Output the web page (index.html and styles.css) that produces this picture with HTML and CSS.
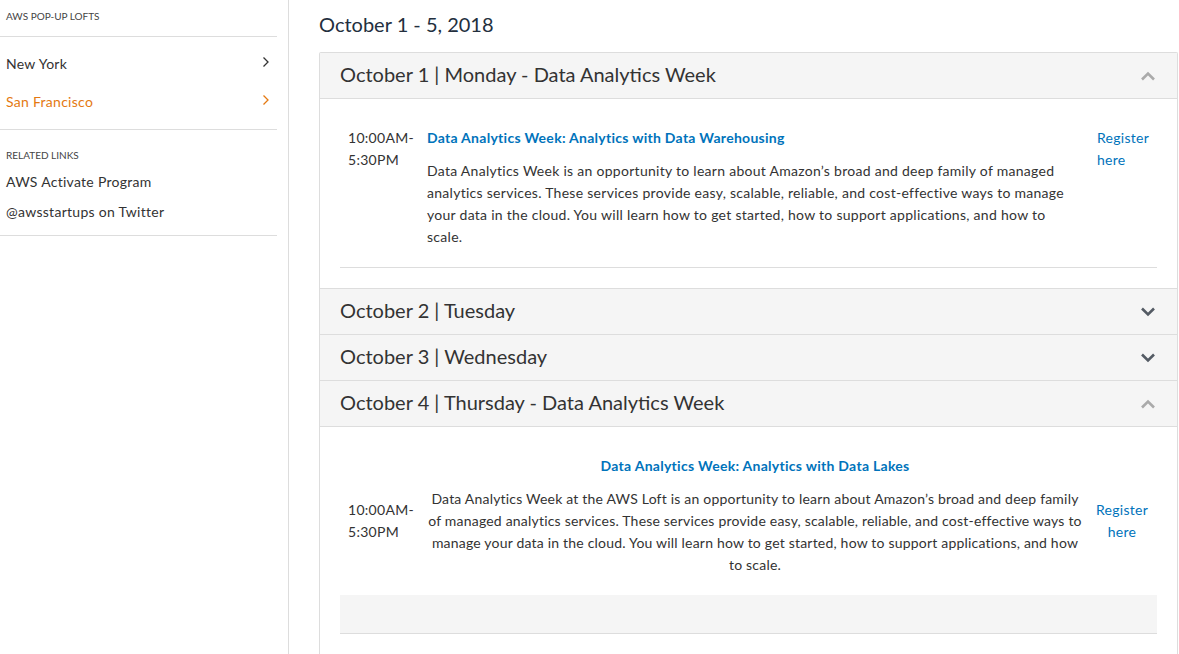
FILE: index.html
```html
<!DOCTYPE html>
<html lang="en">
<head>
    <meta charset="UTF-8">
    <meta name="viewport" content="width=device-width, initial-scale=1.0">
    <title>AWS Pop-up Lofts - San Francisco</title>
    <link rel="stylesheet" href="styles.css">
</head>
<body>
    <div class="page">
        <!-- Sidebar -->
        <aside class="sidebar">
            <div class="side-section">
                <div class="side-label">AWS Pop-up Lofts</div>
            </div>
            <div class="side-section lofts">
                <a class="loft" href="#">New York
                    <svg class="loft-arrow" width="8" height="12" viewBox="0 0 8 12"><path d="M1.5 1.5L6 6l-4.5 4.5" fill="none" stroke="currentColor" stroke-width="1.3"/></svg>
                </a>
                <a class="loft active" href="#">San Francisco
                    <svg class="loft-arrow" width="8" height="12" viewBox="0 0 8 12"><path d="M1.5 1.5L6 6l-4.5 4.5" fill="none" stroke="currentColor" stroke-width="1.3"/></svg>
                </a>
            </div>
            <div class="side-section related">
                <div class="side-label">Related Links</div>
                <a class="side-link" href="#">AWS Activate Program</a>
                <a class="side-link" href="#">@awsstartups on Twitter</a>
            </div>
        </aside>

        <!-- Schedule -->
        <main class="main">
            <h2 class="week-title">October 1 - 5, 2018</h2>

            <div class="accordion">
                <div class="day open">
                    <div class="day-head">
                        <span>October 1 | Monday - Data Analytics Week</span>
                        <svg class="caret" width="16" height="10" viewBox="0 0 16 10"><path d="M2 8.5L8 2.5l6 6" fill="none" stroke="currentColor" stroke-width="2.6"/></svg>
                    </div>
                    <div class="day-body">
                        <div class="event">
                            <div class="event-time">10:00AM-<br>5:30PM</div>
                            <div class="event-info">
                                <a class="event-title" href="#">Data Analytics Week: Analytics with Data Warehousing</a>
                                <p>Data Analytics Week is an opportunity to learn about Amazon’s broad and deep family of managed analytics services. These services provide easy, scalable, reliable, and cost-effective ways to manage your data in the cloud. You will learn how to get started, how to support applications, and how to scale.</p>
                            </div>
                            <a class="event-register" href="#">Register<br>here</a>
                        </div>
                    </div>
                </div>

                <div class="day">
                    <div class="day-head">
                        <span>October 2 | Tuesday</span>
                        <svg class="caret" width="16" height="10" viewBox="0 0 16 10"><path d="M2 1.5l6 6 6-6" fill="none" stroke="currentColor" stroke-width="2.6"/></svg>
                    </div>
                </div>

                <div class="day">
                    <div class="day-head">
                        <span>October 3 | Wednesday</span>
                        <svg class="caret" width="16" height="10" viewBox="0 0 16 10"><path d="M2 1.5l6 6 6-6" fill="none" stroke="currentColor" stroke-width="2.6"/></svg>
                    </div>
                </div>

                <div class="day open">
                    <div class="day-head">
                        <span>October 4 | Thursday - Data Analytics Week</span>
                        <svg class="caret" width="16" height="10" viewBox="0 0 16 10"><path d="M2 8.5L8 2.5l6 6" fill="none" stroke="currentColor" stroke-width="2.6"/></svg>
                    </div>
                    <div class="day-body last">
                        <div class="event centered">
                            <div class="event-time">10:00AM-<br>5:30PM</div>
                            <div class="event-info">
                                <a class="event-title" href="#">Data Analytics Week: Analytics with Data Lakes</a>
                                <p>Data Analytics Week at the AWS Loft is an opportunity to learn about Amazon’s broad and deep family of managed analytics services. These services provide easy, scalable, reliable, and cost-effective ways to manage your data in the cloud. You will learn how to get started, how to support applications, and how to scale.</p>
                            </div>
                            <a class="event-register" href="#">Register<br>here</a>
                        </div>
                        <div class="event-empty"></div>
                    </div>
                </div>
            </div>
        </main>
    </div>
</body>
</html>
```

FILE: styles.css
```css
body {
    margin: 0;
    font-family: Lato, "Open Sans", Arial, sans-serif;
    font-size: 14px;
    letter-spacing: 0.28px;
    color: #333;
    background-color: #fff;
}

a {
    text-decoration: none;
}

.page {
    display: flex;
    min-height: 654px;
}

/* Sidebar */
.sidebar {
    width: 277px;
    padding-right: 11px;
    border-right: 1px solid #ddd;
    flex-shrink: 0;
}

.side-section {
    border-bottom: 1px solid #ddd;
    padding: 0 6px;
}

.side-section:first-child {
    padding-top: 10px;
    padding-bottom: 13px;
}

.side-label {
    font-size: 10px;
    letter-spacing: 0;
    text-transform: uppercase;
    color: #444;
    line-height: 13px;
}

.lofts {
    padding-top: 8px;
    padding-bottom: 8px;
}

.loft {
    display: flex;
    justify-content: space-between;
    align-items: center;
    color: #333;
    font-size: 14px;
    line-height: 22px;
    padding: 8px 0;
}

.loft-arrow {
    margin-right: 1px;
    margin-top: -5px;
}

.loft.active {
    color: #e47911;
}

.related {
    padding-top: 19px;
    padding-bottom: 8px;
}

.related .side-label {
    margin-bottom: 5px;
}

.side-link {
    display: block;
    color: #333;
    font-size: 14px;
    line-height: 30px;
}

/* Main */
.main {
    flex: 1;
    padding: 0 1px 0 30px;
}

.week-title {
    font-size: 20px;
    font-weight: normal;
    letter-spacing: 0;
    color: #232f3e;
    margin: 11px 0 15px;
    line-height: 26px;
}

.accordion {
    border: 1px solid #ddd;
    border-bottom: none;
    border-radius: 2px 2px 0 0;
}

.day-head {
    display: flex;
    justify-content: space-between;
    align-items: center;
    height: 42px;
    padding: 0 20px 3px;
    background-color: #f5f5f5;
    border-bottom: 1px solid #ddd;
    font-size: 20px;
    letter-spacing: 0;
    color: #333;
}

.caret {
    color: #545b64;
    margin-right: 1px;
    margin-top: 3px;
}

.day.open .caret {
    color: #aaa;
}

.day-body {
    padding: 28px 20px 20px;
    border-bottom: 1px solid #ddd;
}

.day-body.last {
    padding-bottom: 40px;
}

.event {
    display: grid;
    grid-template-columns: 79px 1fr 74px;
    border-bottom: 1px solid #ddd;
    padding: 0 0 19px 8px;
    line-height: 22px;
}

.event-title {
    display: block;
    font-weight: bold;
    color: #0073bb;
}

.event-info p {
    margin: 11px 0 0;
}

.event-register {
    color: #0073bb;
    padding-left: 14px;
}

.event.centered {
    align-items: center;
    border-bottom: none;
    padding-bottom: 8px;
}

.event.centered .event-info {
    text-align: center;
    padding-bottom: 11px;
}

.event.centered .event-info p {
    letter-spacing: 0.2px;
}

.event.centered .event-register {
    text-align: center;
    padding-left: 4px;
}

.event-empty {
    height: 38px;
    background-color: #f5f5f5;
    border-bottom: 1px solid #ddd;
}
```
